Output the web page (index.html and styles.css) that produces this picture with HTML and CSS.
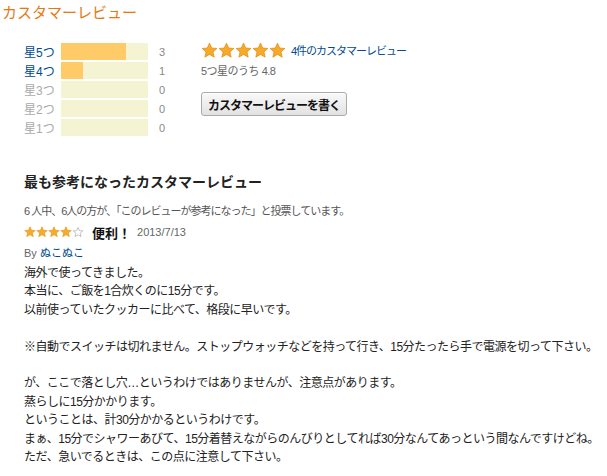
FILE: index.html
```html
<html lang="ja">
  <head>
    <meta charset="UTF-8" />
    <meta name="viewport" content="width=device-width, initial-scale=1.0" />
    <title>カスタマーレビュー</title>
    <link rel="stylesheet" href="styles.css">
  </head>
  <body>
    <h2 class="page_title">カスタマーレビュー</h2>

    <div class="summary">
      <div class="histogram">
        <div class="hist_row">
          <a class="label link">星5つ</a>
          <div class="bar"><div class="fill" style="width: 75%"></div></div>
          <span class="count">3</span>
        </div>
        <div class="hist_row">
          <a class="label link">星4つ</a>
          <div class="bar"><div class="fill" style="width: 25%"></div></div>
          <span class="count">1</span>
        </div>
        <div class="hist_row">
          <span class="label">星3つ</span>
          <div class="bar"></div>
          <span class="count">0</span>
        </div>
        <div class="hist_row">
          <span class="label">星2つ</span>
          <div class="bar"></div>
          <span class="count">0</span>
        </div>
        <div class="hist_row">
          <span class="label">星1つ</span>
          <div class="bar"></div>
          <span class="count">0</span>
        </div>
      </div>

      <div class="overall">
        <div class="overall_top">
          <span class="stars big">
            <svg viewBox="0 0 24 24"><path class="star_full" d="M12 1.5l3.1 7 7.4.6-5.6 4.9 1.7 7.4L12 17.5l-6.6 3.9 1.7-7.4-5.6-4.9 7.4-.6z"/></svg>
            <svg viewBox="0 0 24 24"><path class="star_full" d="M12 1.5l3.1 7 7.4.6-5.6 4.9 1.7 7.4L12 17.5l-6.6 3.9 1.7-7.4-5.6-4.9 7.4-.6z"/></svg>
            <svg viewBox="0 0 24 24"><path class="star_full" d="M12 1.5l3.1 7 7.4.6-5.6 4.9 1.7 7.4L12 17.5l-6.6 3.9 1.7-7.4-5.6-4.9 7.4-.6z"/></svg>
            <svg viewBox="0 0 24 24"><path class="star_full" d="M12 1.5l3.1 7 7.4.6-5.6 4.9 1.7 7.4L12 17.5l-6.6 3.9 1.7-7.4-5.6-4.9 7.4-.6z"/></svg>
            <svg viewBox="0 0 24 24"><path class="star_full" d="M12 1.5l3.1 7 7.4.6-5.6 4.9 1.7 7.4L12 17.5l-6.6 3.9 1.7-7.4-5.6-4.9 7.4-.6z"/></svg>
          </span>
          <a class="link review_count">4件のカスタマーレビュー</a>
        </div>
        <div class="average">5つ星のうち 4.8</div>
        <button class="write_btn">カスタマーレビューを書く</button>
      </div>
    </div>

    <h3 class="helpful_title">最も参考になったカスタマーレビュー</h3>

    <div class="review">
      <div class="votes">6 人中、6人の方が、「このレビューが参考になった」と投票しています。</div>
      <div class="review_head">
        <span class="stars small">
          <svg viewBox="0 0 24 24"><path class="star_full" d="M12 1.5l3.1 7 7.4.6-5.6 4.9 1.7 7.4L12 17.5l-6.6 3.9 1.7-7.4-5.6-4.9 7.4-.6z"/></svg>
          <svg viewBox="0 0 24 24"><path class="star_full" d="M12 1.5l3.1 7 7.4.6-5.6 4.9 1.7 7.4L12 17.5l-6.6 3.9 1.7-7.4-5.6-4.9 7.4-.6z"/></svg>
          <svg viewBox="0 0 24 24"><path class="star_full" d="M12 1.5l3.1 7 7.4.6-5.6 4.9 1.7 7.4L12 17.5l-6.6 3.9 1.7-7.4-5.6-4.9 7.4-.6z"/></svg>
          <svg viewBox="0 0 24 24"><path class="star_full" d="M12 1.5l3.1 7 7.4.6-5.6 4.9 1.7 7.4L12 17.5l-6.6 3.9 1.7-7.4-5.6-4.9 7.4-.6z"/></svg>
          <svg viewBox="0 0 24 24"><path class="star_empty" d="M12 3l2.8 6.3 6.7.6-5.1 4.5 1.5 6.7L12 17.6l-5.9 3.5 1.5-6.7-5.1-4.5 6.7-.6z"/></svg>
        </span>
        <b class="review_title">便利！</b>
        <span class="date">2013/7/13</span>
      </div>
      <div class="author">By <a class="link">ぬこぬこ</a></div>

      <div class="review_text">
        海外で使ってきました。<br>
        本当に、ご飯を1合炊くのに15分です。<br>
        以前使っていたクッカーに比べて、格段に早いです。<br>
        <br>
        ※自動でスイッチは切れません。ストップウォッチなどを持って行き、15分たったら手で電源を切って下さい。<br>
        <br>
        が、ここで落とし穴…というわけではありませんが、注意点があります。<br>
        蒸らしに15分かかります。<br>
        ということは、計30分かかるというわけです。<br>
        まぁ、15分でシャワーあびて、15分着替えながらのんびりとしてれば30分なんてあっという間なんですけどね。<br>
        ただ、急いでるときは、この点に注意して下さい。
      </div>
    </div>
  </body>
</html>
```

FILE: styles.css
```css
* {
  padding: 0;
  margin: 0;
  box-sizing: border-box;
}

body {
  width: 100%;
  font-family: "Liberation Sans", "Noto Sans CJK JP", sans-serif;
  font-size: 11px;
  color: #333;
  background: #fff;
}

.link {
  color: #004b91;
  text-decoration: none;
}

.page_title {
  font-size: 15px;
  font-weight: normal;
  color: #e47911;
  line-height: 20px;
  padding: 3px 0 0 2px;
}

.summary {
  display: flex;
  margin-top: 20px;
  padding-left: 24px;
}

.histogram {
  width: 177px;
}

.hist_row {
  display: flex;
  align-items: center;
  height: 17px;
  margin-bottom: 2px;
}

.hist_row .label {
  width: 37px;
  font-size: 12px;
  color: #aaa;
}
.hist_row .label.link {
  color: #004b91;
}

.bar {
  width: 87px;
  height: 17px;
  background-color: #f4f4d2;
}
.bar .fill {
  height: 100%;
  background-color: #ffcb69;
}

.count {
  margin-left: 11px;
  color: #888;
  font-size: 11px;
}

.overall_top {
  display: flex;
  align-items: center;
  height: 18px;
  margin-top: -2px;
}

.stars {
  display: inline-flex;
}
.stars svg {
  display: block;
}
.stars.big svg {
  width: 17px;
  height: 17px;
}
.stars.small svg {
  width: 12px;
  height: 12px;
}
.star_full {
  fill: #f7a928;
  stroke: #e08a10;
  stroke-width: 1;
}
.star_empty {
  fill: #fff;
  stroke: #999;
  stroke-width: 1.2;
}

.review_count {
  margin-left: 5px;
  font-size: 11px;
  letter-spacing: -1px;
}

.average {
  margin-top: 3px;
  color: #666;
  font-size: 11px;
  letter-spacing: -0.5px;
}

.write_btn {
  margin-top: 14px;
  padding: 0 6px;
  height: 24px;
  font-family: "Liberation Sans", "Noto Sans CJK JP", sans-serif;
  font-size: 12px;
  font-weight: bold;
  letter-spacing: -1px;
  color: #111;
  border: 1px solid #aaa;
  border-radius: 3px;
  background: linear-gradient(#f9f9f9, #e2e2e2);
  box-shadow: inset 0 1px 0 #fff;
}

.helpful_title {
  margin: 35px 0 0 24px;
  font-size: 14px;
  font-weight: bold;
  color: #222;
  line-height: 18px;
}

.review {
  padding-left: 24px;
}

.votes {
  margin-top: 11px;
  color: #555;
  font-size: 11px;
  letter-spacing: -1px;
}

.review_head {
  display: flex;
  align-items: center;
  margin-top: 6px;
  height: 16px;
}
.review_title {
  margin-left: 8px;
  font-size: 13px;
  color: #111;
}
.date {
  margin-left: 6px;
  color: #666;
  font-size: 11px;
}

.author {
  margin-top: 4px;
  color: #666;
  font-size: 11px;
}

.review_text {
  margin-top: 4px;
  font-size: 12px;
  line-height: 18.4px;
  color: #222;
  letter-spacing: -0.5px;
}
```
